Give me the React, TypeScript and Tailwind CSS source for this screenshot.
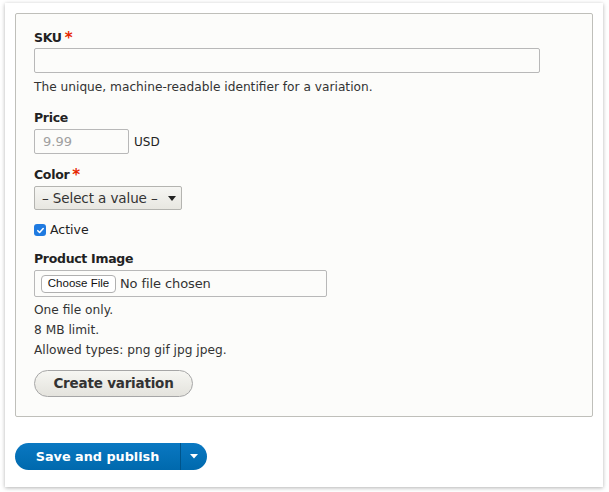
import React from "react";

// Drupal-style "add variation" form inside a card
const font = "font-['DejaVu_Sans','Liberation_Sans',sans-serif]";

function Required() {
  return <span className="ml-[3px] text-[15px] leading-none text-[#e62600]">*</span>;
}

function Label({ children, required }: { children: React.ReactNode; required?: boolean }) {
  return (
    <div className="flex h-[18px] items-center text-[12.5px] font-bold tracking-[-0.3px] text-[#222]">
      {children}
      {required && <Required />}
    </div>
  );
}

function Help({ children }: { children: React.ReactNode }) {
  return <div className="h-[20px] text-[12.2px] leading-[20px] text-[#333]">{children}</div>;
}

export default function App() {
  return (
    <div className={`min-h-[492px] bg-white pl-[5px] pt-[3px] ${font}`}>
      <div className="h-[484px] w-[598px] bg-white p-[10px] shadow-[0_1px_4px_rgba(0,0,0,0.3)]">
        <div className="w-[578px] rounded-[2px] border border-[#bfbfba] bg-[#fcfcfa] pb-[19px] pl-[18px] pt-[15px]">
          <Label required>SKU</Label>
          <div className="mt-[1px] h-[25px] w-[506px] rounded-[2px] border border-[#b8b8b8] bg-[#fcfcfa]" />
          <div className="mt-[4px]">
            <Help>The unique, machine-readable identifier for a variation.</Help>
          </div>

          <div className="mt-[12px]">
            <Label>Price</Label>
          </div>
          <div className="mt-[2px] flex items-center gap-[5px]">
            <div className="flex h-[25px] w-[95px] items-center rounded-[2px] border border-[#b8b8b8] bg-[#fcfcfa] pl-[8px] text-[13px] text-[#a0a0a0]">
              9.99
            </div>
            <span className="text-[12px] text-[#222]">USD</span>
          </div>

          <div className="mt-[12px]">
            <Label required>Color</Label>
          </div>
          <div className="mt-[2px] flex h-[24px] w-[148px] items-center justify-between rounded-[2px] border border-[#b4b4b0] bg-gradient-to-b from-[#f6f6f3] to-[#e8e7e1] pl-[7px] pr-[4px] text-[13.5px] tracking-[-0.1px] text-[#333]">
            <span>– Select a value –</span>
            <svg width="10" height="7" viewBox="0 0 10 7">
              <path d="M1 1h8L5 6z" fill="#222" />
            </svg>
          </div>

          <div className="mt-[13px] flex h-[14px] items-center gap-[4px]">
            <span className="flex h-[12px] w-[12px] items-center justify-center rounded-[3px] bg-[#1f7ae0]">
              <svg width="9" height="9" viewBox="0 0 10 10">
                <path d="M2 5.2l2 2 4-4.4" fill="none" stroke="#fff" strokeWidth="1.7" strokeLinecap="round" strokeLinejoin="round" />
              </svg>
            </span>
            <span className="text-[12.5px] text-[#222]">Active</span>
          </div>

          <div className="mt-[13px]">
            <Label>Product Image</Label>
          </div>
          <div className="mt-[2px] flex h-[27px] w-[293px] items-center rounded-[2px] border border-[#b8b8b8] bg-[#fcfcfa] pl-[6px]">
            <span className="flex h-[18px] w-[75px] items-center justify-center rounded-[4px] border border-[#b0b0b0] bg-white font-['Liberation_Sans',sans-serif] text-[11.5px] text-[#111]">
              Choose File
            </span>
            <span className="ml-[4px] text-[13px] tracking-[-0.1px] text-[#333]">No file chosen</span>
          </div>
          <div className="mt-[3px]">
            <Help>One file only.</Help>
            <Help>8 MB limit.</Help>
            <Help>Allowed types: png gif jpg jpeg.</Help>
          </div>

          <div className="mt-[10px] flex h-[27px] w-[159px] items-center justify-center rounded-full border border-[#a6a6a6] bg-gradient-to-b from-[#f6f6f2] to-[#e4e3dd] text-[13.5px] font-bold tracking-[-0.2px] text-[#333]">
            Create variation
          </div>
        </div>

        <div className="mt-[26px] flex h-[27px] w-[192px] overflow-hidden rounded-full bg-gradient-to-b from-[#0a78c2] to-[#0069ad] text-white">
          <div className="flex w-[165px] items-center justify-center text-[12.8px] font-bold">
            Save and publish
          </div>
          <div className="w-px bg-[#00548a]" />
          <div className="flex flex-1 items-center justify-center">
            <svg width="8" height="5" viewBox="0 0 8 5">
              <path d="M0 0h8L4 4.5z" fill="#fff" />
            </svg>
          </div>
        </div>
      </div>
    </div>
  );
}
